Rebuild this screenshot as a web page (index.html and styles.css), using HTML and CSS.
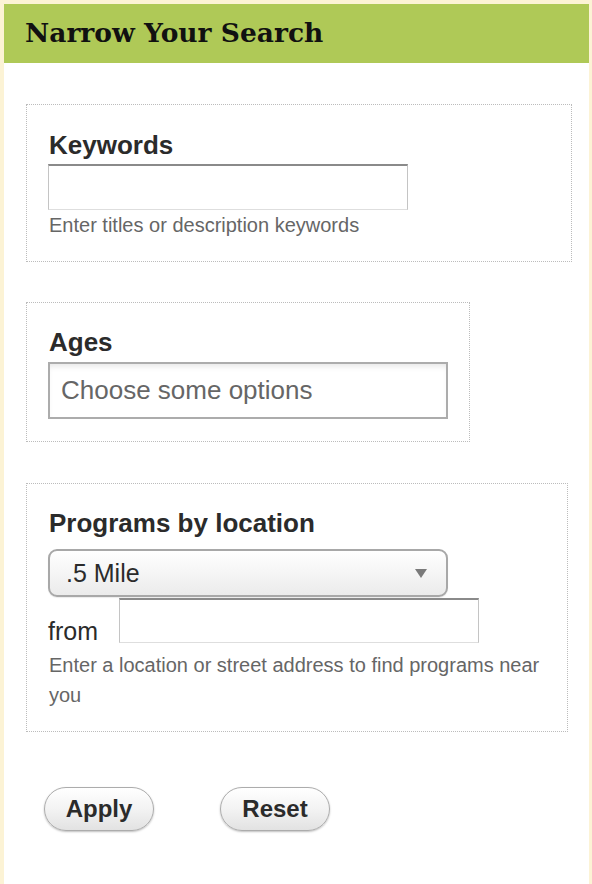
FILE: index.html
```html
<!DOCTYPE html>
<html>
<head>
<meta charset="utf-8">
<link rel="stylesheet" href="styles.css">
</head>
<body>
<div class="panel">
  <div class="header"><h2 class="title">Narrow Your Search</h2></div>
  <div class="content">
    <div class="group group-keywords">
      <label class="label">Keywords</label>
      <input class="text-input text-keywords" type="text">
      <div class="help">Enter titles or description keywords</div>
    </div>
    <div class="group group-ages">
      <label class="label label-ages">Ages</label>
      <div class="multi">Choose some options</div>
    </div>
    <div class="group group-location">
      <label class="label label-loc">Programs by location</label>
      <div class="select"><span>.5 Mile</span><span class="arrow"></span></div>
      <div class="from-row">
        <span class="from">from</span>
        <input class="text-input text-from" type="text">
      </div>
      <div class="help help-loc">Enter a location or street address to find programs near you</div>
    </div>
    <div class="actions">
      <button class="btn">Apply</button>
      <button class="btn">Reset</button>
    </div>
  </div>
</div>
</body>
</html>
```
FILE: styles.css
```css
html, body {
  margin: 0;
  padding: 0;
}
body {
  background: #fcf3d5;
  font-family: "Liberation Sans", Arial, Helvetica, sans-serif;
  color: #333;
}
.panel {
  margin: 4px 3px 0 4px;
  background: #fff;
  min-height: 880px;
}
.header {
  height: 59px;
  background: #afc957;
  padding-left: 21px;
}
.title {
  margin: 0;
  font-family: "DejaVu Serif", serif;
  font-weight: bold;
  font-size: 26.5px;
  line-height: 57px;
  color: #111;
}
.content {
  padding: 41px 0 0 22px;
}
.group {
  box-sizing: border-box;
  border: 1px dotted #bcbcbc;
  padding: 25px 0 21px 21px;
  display: flex;
  flex-direction: column;
  align-items: flex-start;
}
.group-keywords { width: 546px; }
.group-ages { width: 444px; margin-top: 40px; padding-top: 24px; padding-bottom: 22px; }
.group-location { width: 542px; margin-top: 41px; padding-top: 24px; padding-bottom: 21px; }
.label {
  font-weight: bold;
  font-size: 26px;
  line-height: 30px;
  color: #2b2b2b;
  padding-left: 1px;
  margin-bottom: 4px;
}
.label-ages { margin-bottom: 5px; }
.label-loc { margin-bottom: 11px; }
.text-input {
  box-sizing: border-box;
  width: 360px;
  margin: 0;
  padding: 0;
  background: #fff;
  border-style: solid;
  border-width: 2px 1px 1px 1px;
  border-color: #8a8a8a #c4c4c4 #dedede #c4c4c4;
  outline: none;
}
.text-keywords { height: 46px; }
.help {
  font-size: 20px;
  line-height: 30px;
  color: #666;
  padding-left: 1px;
}
.help-loc {
  margin-top: 7px;
  width: 495px;
}
.multi {
  box-sizing: border-box;
  width: 400px;
  height: 57px;
  border: 2px solid #acacac;
  box-shadow: inset 0 5px 6px -3px #e4e4e4;
  padding-left: 11px;
  font-size: 26px;
  line-height: 53px;
  color: #666;
}
.select {
  box-sizing: border-box;
  width: 400px;
  height: 48px;
  border: 2px solid #a8a8a8;
  border-radius: 9px;
  background: linear-gradient(#ffffff, #f6f6f6 45%, #ebebeb);
  box-shadow: 0 1px 1px rgba(0,0,0,0.08);
  padding: 0 19px 0 16px;
  display: flex;
  align-items: center;
  justify-content: space-between;
  font-size: 25px;
  color: #2b2b2b;
}
.arrow {
  width: 0;
  height: 0;
  border-left: 6px solid transparent;
  border-right: 6px solid transparent;
  border-top: 9px solid #7a7a7a;
}
.from-row {
  display: flex;
  align-items: flex-end;
  gap: 21px;
  margin-top: 1px;
}
.from {
  font-size: 25px;
  line-height: 25px;
  color: #2b2b2b;
  margin-bottom: -1px;
}
.text-from { height: 45px; }
.actions {
  display: flex;
  gap: 66px;
  margin: 55px 0 0 18px;
}
.btn {
  box-sizing: border-box;
  width: 110px;
  height: 44px;
  border: 1px solid #acacac;
  border-radius: 22px;
  background: linear-gradient(#ffffff, #f3f3f3 50%, #e2e2e2);
  box-shadow: 0 1px 2px rgba(0,0,0,0.25);
  font-family: "Liberation Sans", Arial, sans-serif;
  font-weight: bold;
  font-size: 24px;
  color: #2b2b2b;
  padding: 0;
}
```
